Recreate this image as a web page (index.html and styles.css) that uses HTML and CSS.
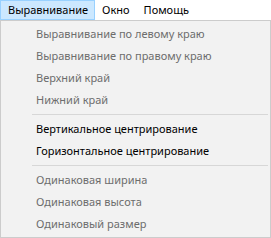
FILE: index.html
```html
<!DOCTYPE html>
<html lang="ru">
<head>
  <meta charset="UTF-8">
  <title>Меню</title>
  <link rel="stylesheet" href="styles.css">
</head>
<body>
  <div class="menubar">
    <div class="top-item active">Выравнивание</div>
    <div class="top-item">Окно</div>
    <div class="top-item">Помощь</div>
  </div>
  <div class="popup">
    <div class="item disabled">Выравнивание по левому краю</div>
    <div class="item disabled">Выравнивание по правому краю</div>
    <div class="item disabled">Верхний край</div>
    <div class="item disabled">Нижний край</div>
    <div class="sep"></div>
    <div class="item">Вертикальное центрирование</div>
    <div class="item">Горизонтальное центрирование</div>
    <div class="sep"></div>
    <div class="item disabled">Одинаковая ширина</div>
    <div class="item disabled">Одинаковая высота</div>
    <div class="item disabled">Одинаковый размер</div>
  </div>
</body>
</html>
```
FILE: styles.css
```css
html, body { margin: 0; padding: 0; }
body { background: #fff; color: #000; font-family: 'Noto Sans', 'Open Sans', sans-serif; font-size: 11px; width: 271px; height: 238px; overflow: hidden; }
.menubar { display: flex; height: 20px; background: #fff; }
.top-item { padding: 0 6px 0 6px; line-height: 18px; border: 1px solid transparent; }
.top-item.active { background: #cce8ff; border-color: #99d1ff; padding-left: 7px; }
.popup { width: 271px; height: 218px; background: #f2f2f2; border: 1px solid #cccccc; padding: 2px 0; box-sizing: border-box; }
.item { height: 22px; line-height: 22px; padding-left: 35px; white-space: nowrap; }
.item.disabled { color: #6d6d6d; }
.sep { height: 1px; background: #d7d7d7; margin: 3px 2px 3px 31px; }
```
